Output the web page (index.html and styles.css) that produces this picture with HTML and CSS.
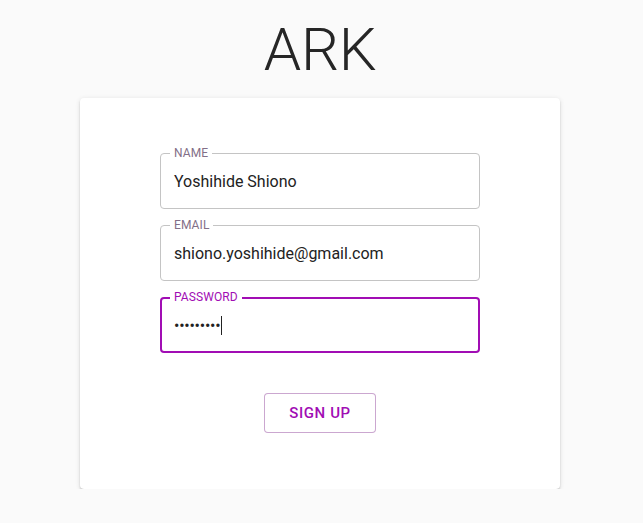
FILE: index.html
```html
<!DOCTYPE html>
<html lang="en">
<head>
<meta charset="utf-8">
<title>ARK</title>
<link rel="stylesheet" href="styles.css">
</head>
<body>
<div class="page">
  <h1 class="title">ARK</h1>
  <div class="card">
    <form class="form">
      <div class="field">
        <span class="label">NAME</span>
        <div class="value">Yoshihide Shiono</div>
      </div>
      <div class="field">
        <span class="label">EMAIL</span>
        <div class="value">shiono.yoshihide@gmail.com</div>
      </div>
      <div class="field focused">
        <span class="label">PASSWORD</span>
        <div class="value password">&#8226;&#8226;&#8226;&#8226;&#8226;&#8226;&#8226;&#8226;&#8226;<span class="caret"></span></div>
      </div>
      <div class="actions">
        <button type="button" class="button">SIGN UP</button>
      </div>
    </form>
  </div>
</div>
</body>
</html>
```

FILE: styles.css
```css
html, body {
  margin: 0;
  padding: 0;
  background: #fafafa;
  font-family: Roboto, "Liberation Sans", sans-serif;
}

.page {
  width: 640px;
  display: flex;
  flex-direction: column;
  align-items: center;
}

.title {
  margin: 14px 0 12px;
  font-size: 60px;
  line-height: 72px;
  font-weight: 300;
  letter-spacing: -0.4px;
  color: #262626;
}

.card {
  width: 480px;
  box-sizing: border-box;
  background: #fff;
  border-radius: 4px;
  box-shadow: 0 3px 1px -2px rgba(0,0,0,0.2), 0 2px 2px 0 rgba(0,0,0,0.14), 0 1px 5px 0 rgba(0,0,0,0.12);
  padding: 55px 80px 56px;
}

.form {
  display: flex;
  flex-direction: column;
  gap: 16px;
}

.field {
  position: relative;
  height: 56px;
  box-sizing: border-box;
  border: 1px solid #c4c4c4;
  border-radius: 4px;
  display: flex;
  align-items: center;
  padding: 0 13px;
}

.field.focused {
  border: 2px solid #a10db4;
  padding: 0 12px;
}

.label {
  position: absolute;
  top: -8px;
  left: 9px;
  padding: 0 4px;
  background: #fff;
  font-size: 12px;
  line-height: 14px;
  color: #836f88;
  letter-spacing: 0.1px;
}

.field.focused .label {
  left: 8px;
  top: -9px;
  color: #a10db4;
}

.value {
  font-size: 16px;
  line-height: 19px;
  color: #222;
  margin-top: 1px;
  letter-spacing: 0;
}

.password {
  display: flex;
  align-items: center;
  letter-spacing: -0.25px;
  font-size: 16px;
}

.caret {
  display: inline-block;
  width: 1px;
  height: 19px;
  background: #222;
  margin-left: 1px;
}

.actions {
  display: flex;
  justify-content: center;
  margin-top: 24px;
}

.button {
  font-family: Roboto, "Liberation Sans", sans-serif;
  font-size: 15px;
  font-weight: 500;
  letter-spacing: 0.6px;
  line-height: 24px;
  padding: 7px 24px;
  color: #a10db4;
  background: #fff;
  border: 1px solid rgba(140, 60, 150, 0.45);
  border-radius: 4px;
  cursor: pointer;
}
```
